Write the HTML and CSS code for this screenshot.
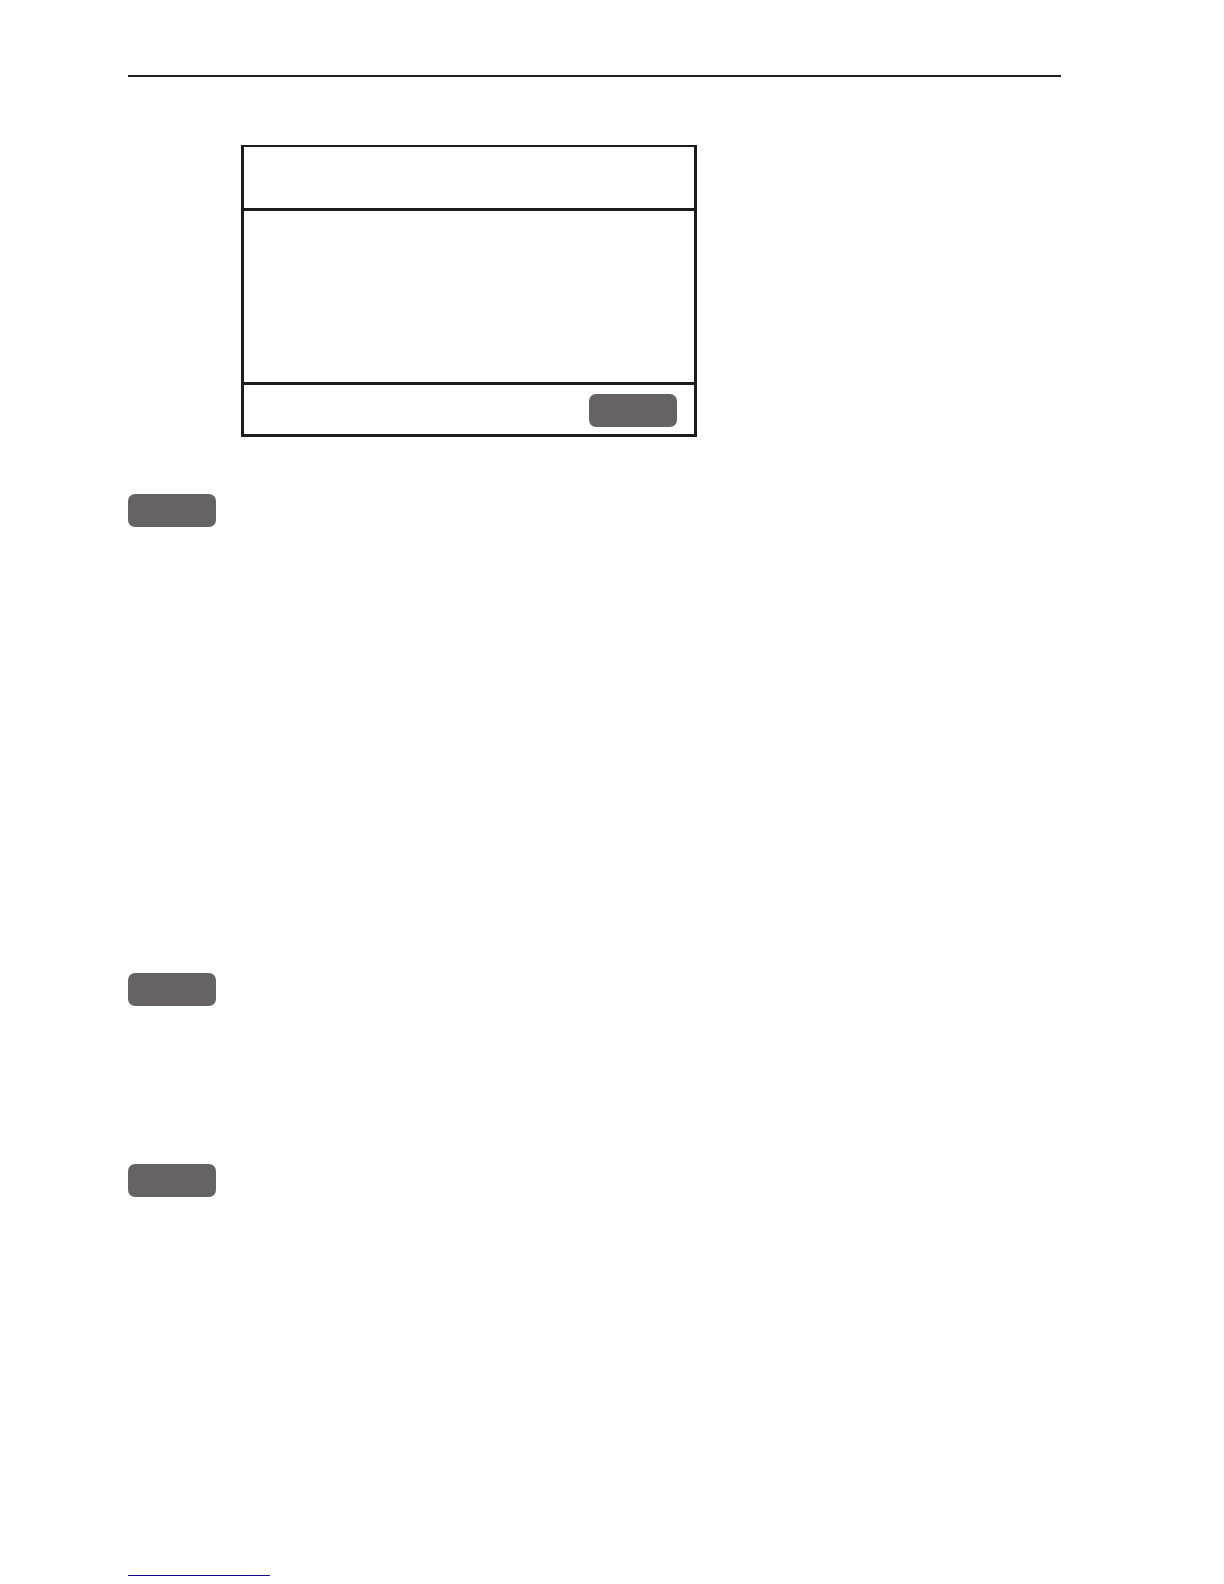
FILE: index.html
```html
<!DOCTYPE html>
<html lang="en">
<head>
    <meta charset="UTF-8">
    <meta name="viewport" content="width=device-width, initial-scale=1.0">
    <title>Manual page</title>
    <link rel="stylesheet" href="styles.css">
</head>
<body>
    <main class="page">
        <hr class="top-rule">

        <!-- Display panel -->
        <section class="panel">
            <div class="panel-header"></div>
            <div class="panel-body"></div>
            <div class="panel-footer">
                <button type="button" class="key" aria-label="Panel key"></button>
            </div>
        </section>

        <!-- Keys -->
        <section class="entry entry-long">
            <button type="button" class="key" aria-label="Key 1"></button>
        </section>
        <section class="entry entry-short">
            <button type="button" class="key" aria-label="Key 2"></button>
        </section>
        <section class="entry entry-last">
            <button type="button" class="key" aria-label="Key 3"></button>
        </section>

        <hr class="footer-rule">
    </main>
</body>
</html>
```

FILE: styles.css
```css
* {
    box-sizing: border-box;
}
body {
    margin: 0;
    background-color: #fff;
    color: #231f20;
    font-family: "Liberation Sans", Arial, sans-serif;
}
.page {
    padding: 75px 163px 8px 128px;
}
.top-rule {
    height: 2px;
    margin: 0 0 68px;
    border: 0;
    background-color: #1e1c1d;
}
.panel {
    width: 100%;
    max-width: 456px;
    margin: 0 0 57px 113px;
    border: 3px solid #1e1c1d;
    border-top-width: 2px;
}
.panel-header {
    min-height: 64px;
    border-bottom: 3px solid #1e1c1d;
}
.panel-body {
    min-height: 174px;
    border-bottom: 3px solid #1e1c1d;
}
.panel-footer {
    display: flex;
    justify-content: flex-end;
    padding: 9px 17px 7px;
}
.key {
    display: block;
    width: 88px;
    height: 33px;
    padding: 0;
    border: 0;
    border-radius: 7px;
    background-color: #656364;
}
.entry-long {
    min-height: 479px;
}
.entry-short {
    min-height: 191px;
}
.entry-last {
    min-height: 411px;
}
.footer-rule {
    width: 142px;
    height: 1px;
    margin: 0;
    border: 0;
    background-color: #0e0a94;
}
```
